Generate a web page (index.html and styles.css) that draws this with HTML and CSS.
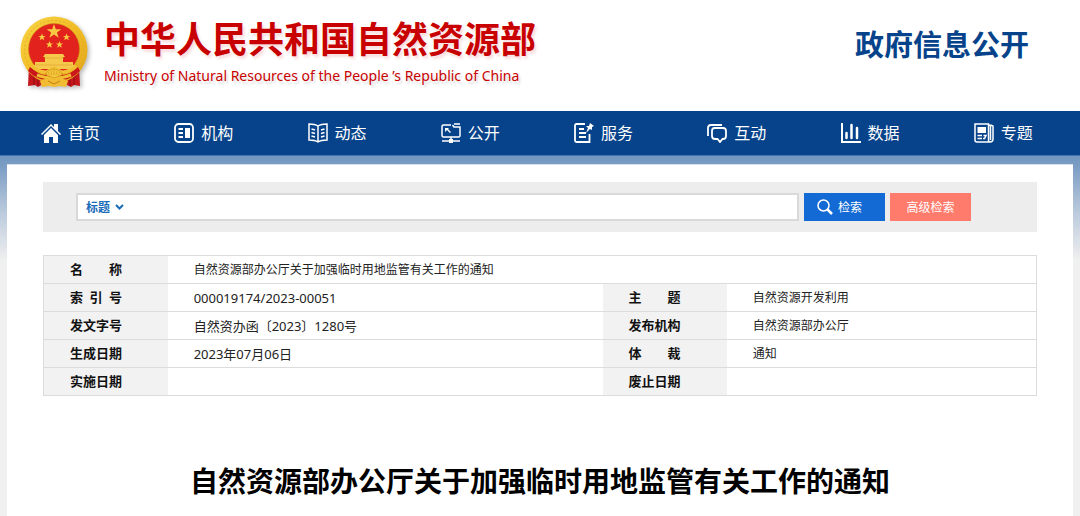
FILE: index.html
```html
<!DOCTYPE html>
<html lang="zh-CN">
<head>
<meta charset="utf-8">
<meta name="viewport" content="width=device-width, initial-scale=1">
<title>自然资源部办公厅关于加强临时用地监管有关工作的通知</title>
<link rel="stylesheet" href="styles.css">
</head>
<body>
<header class="site-header">
  <div class="brand">
    <svg class="emblem" viewBox="0 0 68 74" aria-hidden="true">
      <defs>
        <linearGradient id="gold" x1="0" y1="0" x2="1" y2="1">
          <stop offset="0" stop-color="#f8d548"/><stop offset=".5" stop-color="#f2bd25"/><stop offset="1" stop-color="#dfa21c"/>
        </linearGradient>
      </defs>
      <path d="M9 50 8 70l7-1 3 2 5-3h22l6 3 3-2 6 1-1-20z" fill="#c4161b"/>
      <path d="M14 56v13M18 57v13M50 57v13M54 56v13" stroke="#8f0c12" fill="none"/>
      <circle cx="34" cy="34" r="33.500" fill="url(#gold)"/>
      <circle cx="34" cy="34" r="29.500" fill="none" stroke="#e3ad28" stroke-width="1" stroke-dasharray="2 2"/>
      <circle cx="34" cy="33" r="25.500" fill="#e2231d" stroke="#c98b15" stroke-width=".6"/>
      <g fill="#f7c844">
        <path d="m34 8 1.800 5.200h5.500l-4.400 3.300 1.700 5.300-4.600-3.200-4.600 3.200 1.700-5.300-4.400-3.300h5.500z"/>
        <path id="star" d="m22 17.500 1 2.400h2.600l-2.100 1.700.8 2.600-2.300-1.500-2.300 1.500.8-2.600-2.100-1.700H21z"/>
        <use href="#star" x="24.500"/><use href="#star" x="7.500" y="7.500"/><use href="#star" x="17.500" y="7.500"/>
      </g>
      <path d="M25 38h18l2 3h-2v5h10v3h1v4H14v-4h1v-3h10v-5h-2z" fill="#f5c94b"/>
      <path d="M24 42h20M16 49h36" stroke="#dda02c" stroke-width=".6"/>
      <path d="M10 51q8 7 15 8l9-7 9 7q8-1 15-8l2 4q-8 8-17 9l-9-5-9 5q-9-1-17-9z" fill="#c9171b"/>
      <path d="M12 50q7 6 14 6l8-4 8 4q7 0 14-6M17 59q7 3 17 3t17-3" fill="none" stroke="#f1bf31" stroke-width="3"/>
      <path d="M26 59q0-5 8-6 8 1 8 6l-8 3z" fill="#f5c63c" stroke="#c98b15" stroke-width=".6"/>
      <path d="m30 59-2-3m4 3-1-4m3 4v-5m2 5 1-4m1 4 2-3" stroke="#d59a20" stroke-width=".7" fill="none"/>
      <path d="m34 63 5-2 9 4-2 6-7-1-5 1-5-1-7 1-2-6 9-4z" fill="#f1bc32"/>
      <path d="m28 65 6 3 6-3" fill="none" stroke="#bd7d17"/>
    </svg>
    <div class="brand-text">
      <div class="brand-cn">中华人民共和国自然资源部</div>
      <div class="brand-en">Ministry of Natural Resources of the People ’s Republic of China</div>
    </div>
  </div>
  <div class="section-name">政府信息公开</div>
</header>

<nav class="main-nav" aria-label="主导航">
  <a href="#"><svg viewBox="0 0 20 20"><path d="M0 11 10 1l3 3V1h4v7l3 3-1 1-9-9-9 9z" fill="currentColor"/><path d="m3 12 7-7 7 7v8h-5v-6H8v6H3z" fill="currentColor"/></svg>首页</a>
  <a href="#"><svg viewBox="0 0 20 20"><rect x="1" y="1" width="18" height="18" rx="3.500" fill="none" stroke="currentColor" stroke-width="1.800"/><path d="M4.500 5H9v2H4.500zm0 4H9v2H4.500zm0 4H9v2H4.500zM11 5h5v10h-5z" fill="currentColor"/></svg>机构</a>
  <a href="#"><svg viewBox="0 0 20 20" fill="none" stroke="currentColor" stroke-width="1.500"><path d="M10 3Q7 1 1 1v16q6 0 9 2 3-2 9-2V1q-6 0-9 2zM10 3v16M3.500 6l3.500 1M3.500 9.500l3.500 1M3.500 13l3.500 1M16.500 6 13 7M16.500 9.500l-3.500 1M16.500 13l-3.500 1"/></svg>动态</a>
  <a href="#"><svg viewBox="0 0 20 20" fill="none" stroke="currentColor" stroke-width="1.500"><path d="M10 2H2.500Q1 2 1 3.500v9Q1 14 2.500 14h15q1.500 0 1.500-1.500V4h-6l-1.500-2M13 1h6M10 14v3M1 18h18"/><path d="M4 5h4L7 6l3 3-1 1-3-3-2 2zM8 16h4v4H8z" fill="currentColor" stroke="none"/></svg>公开</a>
  <a href="#"><svg viewBox="0 0 20 20" fill="none" stroke="currentColor" stroke-width="1.800"><path d="M11 1H2.500Q1 1 1 2.500v15Q1 19 2.500 19h13V11M5 6h5M5 10h7M5 14h7"/><path d="m16 0 4 3-2 1v3l-2-1-4 4 2-5-2-2h3z" fill="currentColor" stroke="none"/></svg>服务</a>
  <a href="#"><svg viewBox="0 0 20 20" fill="none" stroke="currentColor" stroke-width="1.800"><path d="M1 13V5q0-3 3-3h11M7.500 5H16q3 0 3 3v5q0 3-3 3h-.5L13 19l-2.500-3H8q-3 0-3-3V8q0-3 2.500-3z"/></svg>互动</a>
  <a href="#"><svg viewBox="0 0 20 20" fill="none" stroke="currentColor"><path d="M1 0v19h19" stroke-width="2"/><path d="M5.500 10v5M10.500 2v13M16 5v10" stroke-width="2.500" stroke-linecap="round"/></svg>数据</a>
  <a href="#"><svg viewBox="0 0 20 20" fill="none" stroke="currentColor" stroke-width="1.500"><path d="M14.500 1H1v16q0 2 2 2h13q3 0 3-3V3q-1-1-4.500-1zM14.500 1v16q0 2 1.500 2M16.500 3v14"/><path d="M3.500 4H12v6H3.500z" fill="currentColor" stroke="none"/><path d="M3.500 12.500H8M3.500 15.500H8M9.500 12.500H12l-1.500 3H9"/></svg>专题</a>
</nav>

<div class="backdrop">
  <main class="sheet">
    <form class="search" role="search">
      <div class="search-field">
        <span class="scope">
          <select aria-label="检索范围"><option>标题</option></select>
          <svg viewBox="0 0 9 6" aria-hidden="true"><path d="m1 1 3.500 3.500L8 1" fill="none" stroke="currentColor" stroke-width="2"/></svg>
        </span>
        <input type="text" aria-label="检索词">
      </div>
      <button class="btn btn-search" type="submit"><svg viewBox="0 0 16 16" fill="none" stroke="currentColor"><circle cx="6.500" cy="6.500" r="5.500" stroke-width="1.500"/><path d="m10.500 10.500 4.500 4.500" stroke-width="2.500"/></svg>检索</button>
      <button class="btn btn-advanced" type="button">高级检索</button>
    </form>

    <table class="meta">
      <colgroup><col class="col-label"><col class="col-main"><col class="col-label"><col></colgroup>
      <tr><th scope="row">名&emsp;&emsp;称</th><td colspan="3">自然资源部办公厅关于加强临时用地监管有关工作的通知</td></tr>
      <tr><th scope="row">索&ensp;引&ensp;号</th><td class="code">000019174/2023-00051</td><th scope="row">主&emsp;&emsp;题</th><td>自然资源开发利用</td></tr>
      <tr><th scope="row">发文字号</th><td class="code">自然资办函〔2023〕1280号</td><th scope="row">发布机构</th><td>自然资源部办公厅</td></tr>
      <tr><th scope="row">生成日期</th><td class="code">2023年07月06日</td><th scope="row">体&emsp;&emsp;裁</th><td>通知</td></tr>
      <tr><th scope="row">实施日期</th><td></td><th scope="row">废止日期</th><td></td></tr>
    </table>

    <h1 class="doc-title">自然资源部办公厅关于加强临时用地监管有关工作的通知</h1>
  </main>
</div>
</body>
</html>
```

FILE: styles.css
```css
* { box-sizing: border-box; }

body {
  margin: 0;
  background: #f0f0f0;
  color: #222;
  font-family: "Noto Sans", "Noto Sans CJK SC", sans-serif;
  font-size: 12px;
}

button, input, select { font: inherit; }

.site-header {
  display: flex;
  justify-content: space-between;
  align-items: flex-start;
  padding: 16px 51px 21px 20px;
  background: #fff;
}

.brand { display: flex; gap: 16px; }

.emblem {
  width: 68px;
  height: 74px;
  filter: drop-shadow(2px 2px 2px #0004);
}

.brand-text { color: #c80000; white-space: nowrap; }

.brand-cn {
  font-size: 36px;
  font-weight: 700;
  line-height: 48px;
  text-shadow: 2px 3px 3px #c8000022;
}

.brand-en {
  font-size: 14px;
  line-height: 24px;
  text-shadow: 2px 3px 2px #0002;
}

.section-name {
  color: #06438a;
  font-size: 29px;
  font-weight: 700;
  line-height: 58px;
  white-space: nowrap;
}

.main-nav {
  display: grid;
  grid-template-columns: repeat(8, 1fr);
  padding: 0 7px;
  background: #06438a;
  border-bottom: 1px solid #4674aa;
}

.main-nav a {
  display: flex;
  align-items: center;
  gap: 7px;
  padding-left: 34px;
  color: #fff;
  font-size: 16px;
  line-height: 44px;
  text-decoration: none;
  white-space: nowrap;
}

.main-nav svg { width: 20px; height: 20px; }

.backdrop {
  padding: 8px 7px 0;
  background: linear-gradient(#7397c1, #7b9dc4 10px, #b9c9dc 55px, #f0f0f0 105px);
}

.sheet {
  min-height: calc(100vh - 164px);
  padding: 17px 36px 14px;
  background: #fff;
  border-top: 1px solid #d5dfeb;
}

.search {
  display: flex;
  gap: 5px;
  padding: 11px 66px 11px 33px;
  background: #ededed;
}

.search-field {
  display: flex;
  flex: 1;
  background: #fff;
  border: 2px solid #d9d9d9;
}

.scope {
  display: flex;
  align-items: center;
  gap: 4px;
  padding-left: 8px;
  color: #1a6cb8;
}

.scope select {
  padding: 0;
  appearance: none;
  background: none;
  border: 0;
  color: inherit;
  font-weight: 700;
}

.scope svg { width: 9px; height: 6px; }

.search-field input {
  flex: 1;
  min-width: 0;
  height: 24px;
  padding: 0 8px;
  border: 0;
  outline: 0;
}

.btn {
  display: flex;
  align-items: center;
  justify-content: center;
  gap: 5px;
  width: 81px;
  height: 28px;
  padding: 0;
  border: 0;
  color: #fff;
}

.btn-search {
  justify-content: flex-start;
  padding-left: 13px;
  background: #136ad5;
}

.btn-search svg { width: 16px; height: 16px; }
.btn-advanced { background: #ff7b6b; }

.meta {
  width: 100%;
  margin-top: 23px;
  border-collapse: collapse;
  table-layout: fixed;
  border: 1px solid #dcdcdc;
}

.col-label { width: 12.5%; }
.col-main { width: 43.8%; }

.meta tr { border-bottom: 1px solid #dcdcdc; }

.meta th,
.meta td {
  height: 28px;
  padding: 0 26px;
  line-height: 27px;
  text-align: left;
  white-space: nowrap;
}

.meta td { padding-top: 1px; line-height: 26px; }

.meta th {
  background: #f2f2f2;
  color: #111;
  font-size: 13px;
}

.meta .code { font-size: 13px; }

.doc-title {
  margin: 65px 0 0;
  color: #000;
  font-size: 28px;
  line-height: 40px;
  text-align: center;
}
```
